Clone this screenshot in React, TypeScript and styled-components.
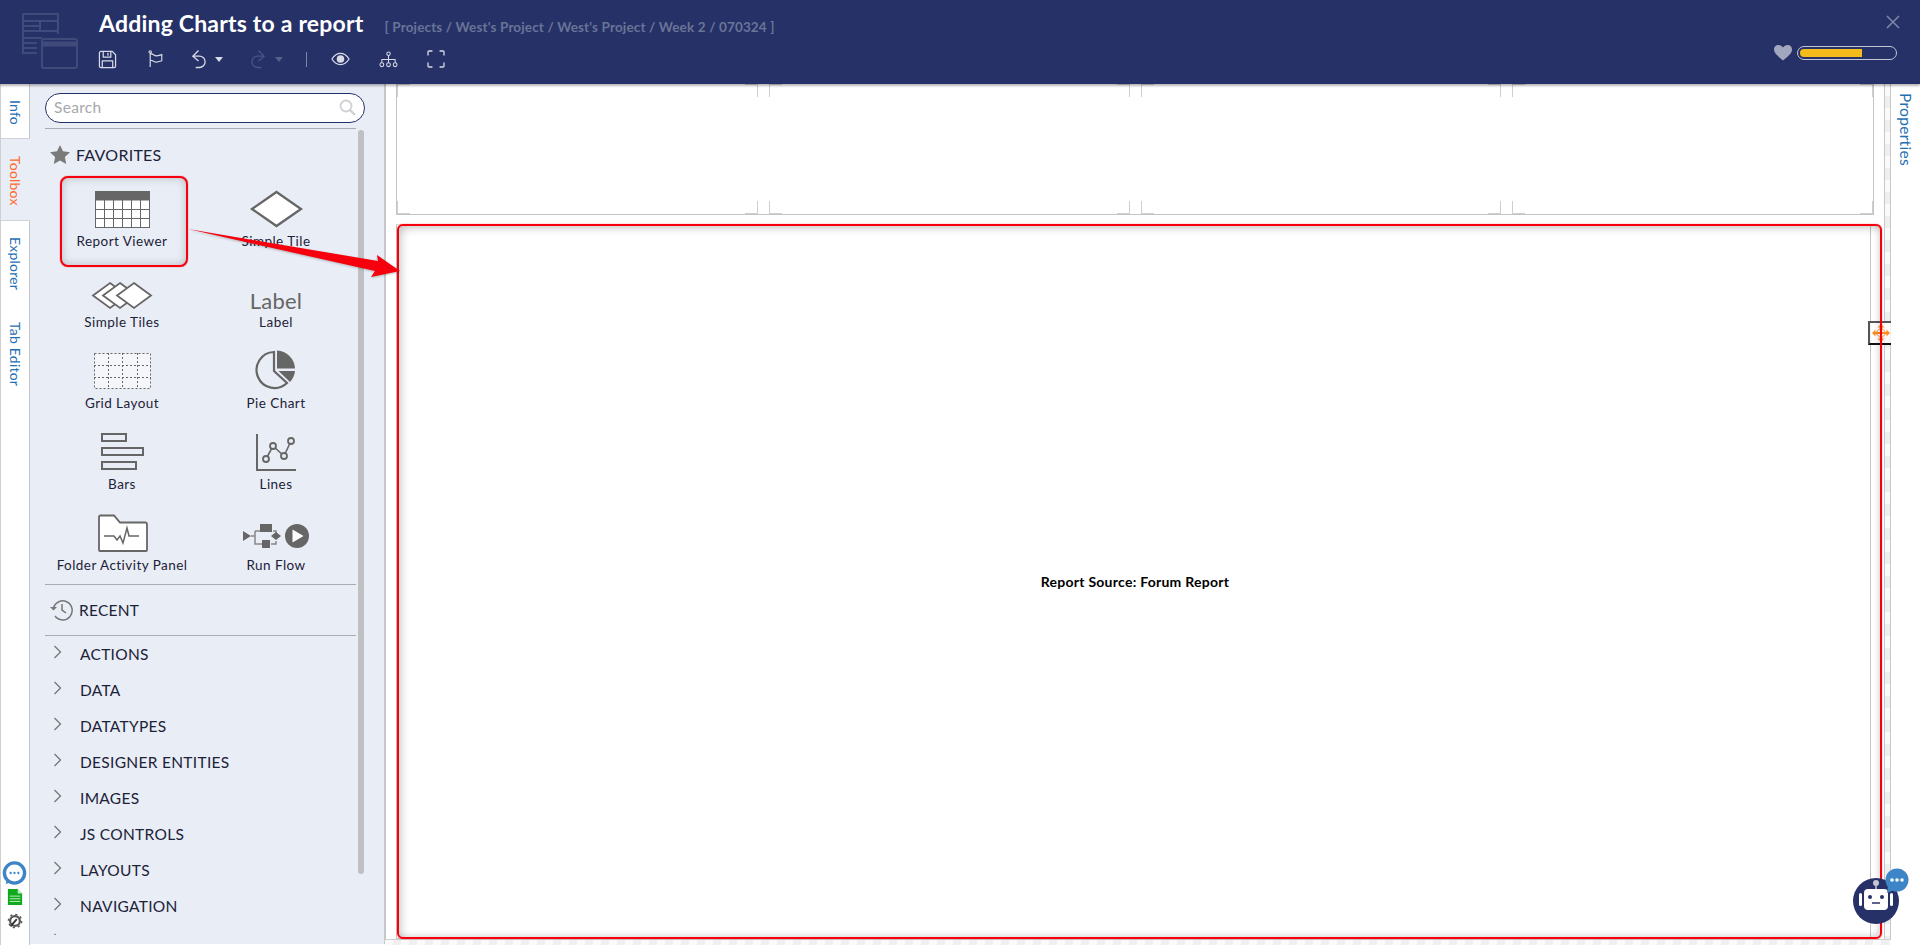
import React from "react";
import styled, { createGlobalStyle } from "styled-components";

const Global = createGlobalStyle`
  html, body { margin: 0; padding: 0; height: 945px; overflow: hidden; background: #fff; }
  body { font-family: Lato, "Open Sans", sans-serif; }
  * { box-sizing: border-box; }
`;

const Page = styled.div`
  position: relative;
  width: 1920px;
  height: 945px;
  display: flex;
  flex-direction: column;
  overflow: hidden;
`;

const Header = styled.header`
  height: 84px;
  flex: none;
  background: #263167;
  display: flex;
  position: relative;
  z-index: 2;
  box-shadow: 0 2px 2px rgba(0, 0, 0, 0.28);
`;
const LogoBox = styled.div`
  width: 99px;
  flex: none;
  padding: 13px 0 0 22px;
`;
const HeadMain = styled.div`
  flex: 1;
  display: flex;
  flex-direction: column;
`;
const TitleRow = styled.div`
  display: flex;
  align-items: baseline;
  height: 44px;
  padding-top: 8px;
`;
const Title = styled.h1`
  margin: 0;
  font-size: 23px;
  line-height: 30px;
  font-weight: 700;
  color: #fff;
  letter-spacing: 0.2px;
`;
const Crumb = styled.span`
  margin-left: 21px;
  font-size: 13.5px;
  font-weight: 700;
  color: #6a7498;
  letter-spacing: 0.14px;
`;
const Toolbar = styled.div`
  display: flex;
  align-items: center;
  height: 30px;
  margin-left: -1px;
`;
const ToolSlot = styled.div<{ $w: number }>`
  width: ${(p) => p.$w}px;
  flex: none;
  display: flex;
  align-items: center;
`;
const Sep = styled.div`
  width: 1px;
  height: 15px;
  background: #7d86a6;
`;
const Caret = styled.i<{ $dim?: boolean }>`
  display: block;
  width: 0;
  height: 0;
  border-left: 4.5px solid transparent;
  border-right: 4.5px solid transparent;
  border-top: 5px solid ${(p) => (p.$dim ? "#56608a" : "#d8dbe6")};
`;
const HeadRight = styled.div`
  width: 150px;
  flex: none;
  display: flex;
  flex-direction: column;
  align-items: flex-end;
  padding: 13px 20px 0 0;
`;
const CloseX = styled.div`
  height: 14px;
  margin-bottom: 18px;
`;
const Vitals = styled.div`
  display: flex;
  align-items: center;
  gap: 5px;
  margin-right: 3px;
`;
const Progress = styled.div`
  width: 100px;
  height: 14px;
  border: 1px solid #c3c6d4;
  border-radius: 7px;
  padding: 2px;
`;
const ProgressFill = styled.div`
  width: 62px;
  height: 8px;
  border-radius: 4px 0 0 4px;
  background: #f3bc1a;
`;

const Body = styled.main`
  flex: 1;
  display: flex;
  min-height: 0;
`;
const Rail = styled.nav`
  width: 30px;
  flex: none;
  display: flex;
  flex-direction: column;
  background: #fff;
  border-left: 1px solid #cfcfcf;
  border-right: 1px solid #c4c6cc;
`;
const RailTab = styled.div<{ $h: number; $active?: boolean }>`
  height: ${(p) => p.$h}px;
  flex: none;
  writing-mode: vertical-rl;
  display: flex;
  align-items: center;
  justify-content: center;
  font-size: 14px;
  letter-spacing: 0.2px;
  padding-top: 2px;
  color: ${(p) => (p.$active ? "#ff6a2b" : "#1f6fb2")};
  background: ${(p) => (p.$active ? "#e9edf5" : "#fff")};
  border-top: ${(p) => (p.$active ? "1px solid #cfd2d8" : "none")};
  border-bottom: ${(p) => (p.$active ? "1px solid #cfd2d8" : "none")};
  margin-right: ${(p) => (p.$active ? "-1px" : "0")};
`;
const RailTools = styled.div`
  margin-top: auto;
  padding-bottom: 16px;
  display: flex;
  flex-direction: column;
  align-items: center;
  margin-left: -1px;
`;

const Panel = styled.aside`
  width: 356px;
  flex: none;
  position: relative;
  background: #e9edf5;
  border-right: 2px solid #c6c7ca;
  padding: 9px 0 0 15px;
  height: 860px;
`;
const SearchBox = styled.div`
  width: 320px;
  height: 30px;
  background: #fff;
  border: 1px solid #263167;
  border-radius: 15px;
  display: flex;
  align-items: center;
  justify-content: space-between;
  padding: 0 8px 2px 8px;
  font-size: 15.5px;
  color: #a6a8ad;
  letter-spacing: 0.3px;
`;
const Divider = styled.div`
  width: 311px;
  height: 1px;
  background: #a9abb0;
`;
const SearchRule = styled(Divider)`
  margin-top: 5px;
`;
const Scrollbar = styled.div`
  position: absolute;
  left: 328px;
  top: 46px;
  width: 6px;
  height: 744px;
  border-radius: 3px;
  background: #bfc0c2;
`;
const SectionHead = styled.div<{ $h: number; $size: number; $nudge: number }>`
  height: ${(p) => p.$h}px;
  display: flex;
  align-items: center;
  gap: 6px;
  padding-left: 5px;
  padding-top: ${(p) => p.$nudge}px;
  font-size: ${(p) => p.$size}px;
  color: #1c2238;
  letter-spacing: 0.25px;
`;
const TileGrid = styled.div`
  display: grid;
  grid-template-columns: 154px 154px;
  grid-auto-rows: 81px;
`;
const Tile = styled.div`
  display: flex;
  flex-direction: column;
  align-items: center;
  padding-top: 10px;
`;
const TileArt = styled.div`
  width: 80px;
  height: 48px;
  display: flex;
  align-items: center;
  justify-content: center;
  color: #666;
`;
const TileLabel = styled.div`
  height: 16px;
  line-height: 16px;
  font-size: 13.5px;
  color: #1c2238;
  white-space: nowrap;
  letter-spacing: 0.45px;
`;
const LabelGlyph = styled.div`
  font-size: 22px;
  line-height: 24px;
  color: #666;
  margin-top: 21px;
  letter-spacing: 0.2px;
`;
const RecentRule = styled(Divider)`
  margin-top: 4px;
`;
const AccordionClip = styled.div`
  height: 299px;
  overflow: hidden;
`;
const AccRow = styled.div`
  height: 36px;
  display: flex;
  align-items: center;
  font-size: 15.5px;
  color: #1c2238;
  letter-spacing: 0.3px;
`;
const AccChevron = styled.span`
  width: 35px;
  padding-left: 8px;
  display: flex;
  margin-top: -5px;
`;

const Gutter = styled.div`
  width: 10px;
  flex: none;
`;
const Canvas = styled.section`
  flex: 1;
  position: relative;
  display: flex;
  flex-direction: column;
  min-width: 0;
  background: #fff;
`;
const Stage = styled.div`
  width: 1478px;
  flex: none;
  display: flex;
  flex-direction: column;
`;
const TopRow = styled.div`
  height: 131px;
  display: grid;
  grid-template-columns: repeat(4, 1fr);
  gap: 11px;
  border-left: 1px solid #c4c4c4;
  border-right: 1px solid #c4c4c4;
  border-bottom: 1px solid #c4c4c4;
`;
const Cell = styled.div`
  background-color: #fff;
  background-repeat: no-repeat;
  background-image:
    linear-gradient(#cfcfcf, #cfcfcf), linear-gradient(#cfcfcf, #cfcfcf),
    linear-gradient(#cfcfcf, #cfcfcf), linear-gradient(#cfcfcf, #cfcfcf),
    linear-gradient(#cfcfcf, #cfcfcf), linear-gradient(#cfcfcf, #cfcfcf),
    linear-gradient(#cfcfcf, #cfcfcf), linear-gradient(#cfcfcf, #cfcfcf);
  background-size: 13px 1px, 1px 13px, 13px 1px, 1px 13px, 13px 1px, 1px 13px, 13px 1px, 1px 13px;
  background-position: left top, left top, right top, right top, left bottom, left bottom, right bottom, right bottom;
`;
const ReportFrame = styled.div`
  margin-top: 9px;
  margin-right: 3px;
  height: 715px;
  border: 1px solid #c4c4c4;
  border-top-color: #dcdcdc;
  display: flex;
  align-items: center;
  justify-content: center;
  font-size: 14px;
  font-weight: 700;
  color: #000;
  letter-spacing: 0.25px;
  padding-left: 3px;
`;
const Checker = styled.div`
  position: absolute;
  left: -11px;
  right: 0;
  bottom: 0;
  height: 6px;
  border-top: 1px solid #d0d0d0;
  background: repeating-conic-gradient(#efefef 0 25%, #fafafa 0 50%) 0 0 / 16px 16px;
`;
const RightGuides = styled.div`
  position: absolute;
  top: 0;
  bottom: 0;
  left: 1488px;
  width: 7px;
  border-left: 1px solid #c8c8c8;
  border-right: 1px solid #c8c8c8;
  background: repeating-conic-gradient(#efefef 0 25%, #fafafa 0 50%) 0 0 / 12px 24px;
`;
const PropertiesRail = styled.div`
  width: 29px;
  flex: none;
  background: #fff;
  writing-mode: vertical-rl;
  font-size: 15.5px;
  letter-spacing: 0.3px;
  color: #1f6fb2;
  padding: 9px 5px 0 0;
`;
const Overlay = styled.svg`
  position: absolute;
  left: 0;
  top: 0;
  pointer-events: none;
  z-index: 3;
`;
const Highlight = styled.div`
  position: absolute;
  left: 60px;
  top: 176px;
  width: 128px;
  height: 91px;
  border: 2px solid #f5000c;
  border-radius: 8px;
  box-shadow: inset 0 0 8px rgba(0, 0, 0, 0.22), 0 0 1px #f5000c;
  z-index: 2;
`;
const ReportHighlight = styled.div`
  position: absolute;
  left: 397px;
  top: 224px;
  width: 1485px;
  height: 715px;
  border: 2px solid #f5000c;
  border-radius: 6px;
  box-shadow: 0 0 1px #f5000c, inset 6px 6px 8px -4px rgba(0, 0, 0, 0.22), inset -4px -4px 6px -3px rgba(0, 0, 0, 0.18);
  z-index: 2;
`;
const MoveHandle = styled.div`
  position: absolute;
  left: 1868px;
  top: 321px;
  width: 23px;
  height: 24px;
  background: rgba(255, 255, 255, 0.75);
  border-left: 2px solid #555;
  border-top: 2px solid #555;
  border-bottom: 2px solid #111;
  display: flex;
  align-items: center;
  justify-content: center;
  z-index: 2;
`;
const Bot = styled.div`
  position: absolute;
  left: 1853px;
  top: 868px;
  z-index: 4;
`;

const G = "#666";
const tool = "#d8dbe6";

const Logo = () => (
  <svg width="56" height="56" viewBox="0 0 56 56" fill="none" stroke="#404b7c" strokeWidth="2">
    <path d="M36 21V1H1v39h14" />
    <path d="M1 8h35M1 13h17M1 18h35M18 8v10M1 25h19M1 30h14M1 35h14" />
    <rect x="20" y="26" width="35" height="29" rx="2" />
    <path d="M20 31h35" strokeWidth="5" />
  </svg>
);
const SaveI = () => (
  <svg width="19" height="19" viewBox="0 0 20 20" fill="none" stroke={tool} strokeWidth="1.300" strokeLinejoin="round">
    <path d="M3 1.500h12l3.500 3.500v12a1.500 1.500 0 0 1-1.500 1.500H3A1.500 1.500 0 0 1 1.500 17V3A1.500 1.500 0 0 1 3 1.500z" />
    <path d="M5.500 1.500v6h8v-6M4.500 18.500v-7h11v7M10.500 3v3" />
  </svg>
);
const FlagI = () => (
  <svg width="16" height="20" viewBox="0 0 18 20" fill="none" stroke={tool} strokeWidth="1.300">
    <circle cx="2.500" cy="2" r="1.300" />
    <path d="M2.500 3.500V19M2.500 4c3-.5 4 2.500 7 2.500 2.500 0 4-1 6-1.500v7c-2 .5-3.500 1.500-6 1.500-3 0-4-2.500-7-2" />
  </svg>
);
const UndoI = ({ c = tool, flip = false }: { c?: string; flip?: boolean }) => (
  <svg width="16" height="20" viewBox="0 0 17 20" fill="none" stroke={c} strokeWidth="1.400" style={flip ? { transform: "scaleX(-1)" } : undefined}>
    <path d="M8 1L2 7l6 5" />
    <path d="M2 7h7a6 6 0 0 1 0 12H5" />
  </svg>
);
const EyeI = () => (
  <svg width="19" height="14" viewBox="0 0 20 14">
    <path d="M1 7c2.500-4 5.500-6 9-6s6.500 2 9 6c-2.500 4-5.500 6-9 6s-6.500-2-9-6z" fill="none" stroke={tool} strokeWidth="1.300" />
    <circle cx="10" cy="7" r="4" fill={tool} />
  </svg>
);
const TreeI = () => (
  <svg width="19" height="17" viewBox="0 0 20 17" fill="none" stroke={tool} strokeWidth="1.100">
    <circle cx="10" cy="2.500" r="1.800" />
    <path d="M10 4.500v4M3 12V8.500h14V12M10 8.500V12" />
    <circle cx="3" cy="14" r="2" />
    <circle cx="10" cy="14" r="2" />
    <circle cx="17" cy="14" r="2" />
  </svg>
);
const FrameI = () => (
  <svg width="18" height="18" viewBox="0 0 18 18" fill="none" stroke={tool} strokeWidth="1.300" strokeLinecap="round">
    <path d="M1 5V2a1 1 0 0 1 1-1h3M13 1h3a1 1 0 0 1 1 1v3M17 13v3a1 1 0 0 1-1 1h-3M5 17H2a1 1 0 0 1-1-1v-3" />
  </svg>
);

const Art = ({ children }: { children: React.ReactNode }) => (
  <svg width="80" height="48" viewBox="0 0 80 48" fill="none" stroke={G}>
    {children}
  </svg>
);
const gridLines = [22, 31, 40, 49, 58];
const ReportI = () => (
  <Art>
    <rect x="13" y="6" width="55" height="9" fill={G} stroke="none" />
    <rect x="13.500" y="15" width="54" height="27.500" fill="#fff" strokeWidth="1" />
    {gridLines.map((x) => (
      <path key={x} d={`M${x}.5 15v27`} strokeWidth="1" />
    ))}
    <path d="M13 24.500h55M13 33.500h55" strokeWidth="1" />
  </Art>
);
const TileI = () => (
  <Art>
    <path d="M40.500 7L65 24 40.500 41 16 24z" fill="#fff" strokeWidth="2.300" />
  </Art>
);
const TilesI = () => (
  <Art>
    <path d="M28 17l17 12.500L28 42 11 29.500z" fill="#fff" strokeWidth="1.800" />
    <path d="M38 17l17 12.500L38 42 21 29.500z" fill="#fff" strokeWidth="1.800" />
    <path d="M52 17l17 12.500L52 42 35 29.500z" fill="#fff" strokeWidth="1.800" />
  </Art>
);
const GridI = () => (
  <Art>
    <g strokeWidth="1" strokeDasharray="2 2">
      <rect x="12.500" y="6.500" width="56" height="35" fill="#f4f6fa" />
      <path d="M26.500 6v36M40.500 6v36M55.500 6v36M12 18.500h57M12 30.500h57" />
    </g>
  </Art>
);
const PieI = () => (
  <Art>
    <path d="M38 5a18 18 0 1 0 13 31L38 24z" strokeWidth="2.200" />
    <path d="M41 3.500a19 19 0 0 1 18 18H41z" fill={G} stroke="none" />
    <path d="M42.500 24H59a19 19 0 0 1-5 11z" fill={G} stroke="none" />
  </Art>
);
const BarsI = () => (
  <Art>
    <g strokeWidth="2" fill="none">
      <rect x="20" y="6" width="24" height="7" />
      <rect x="20" y="20" width="41" height="7" />
      <rect x="20" y="34" width="34" height="7" />
    </g>
  </Art>
);
const LinesI = () => (
  <Art>
    <path d="M21 6v36h39" strokeWidth="2" />
    <path d="M30 31l7-13 11 10 7-15" strokeWidth="1.600" />
    <g fill="#e9edf5" strokeWidth="1.800">
      <circle cx="30" cy="31" r="3" />
      <circle cx="37" cy="18" r="3" />
      <circle cx="48" cy="28" r="3" />
      <circle cx="55" cy="13" r="3" />
    </g>
  </Art>
);
const FolderI = () => (
  <Art>
    <path d="M17 8a1.500 1.500 0 0 1 1.500-1.500H32l6 7h26a1.500 1.500 0 0 1 1 1.500v26a1 1 0 0 1-1 1H18a1 1 0 0 1-1-1z" fill="#fff" strokeWidth="1.800" />
    <path d="M22 27h10l3 4 3-4 3 7 4-15 2 8h10" strokeWidth="1.500" />
  </Art>
);
const RunI = () => (
  <Art>
    <path d="M7 22l8 5-8 5z" fill={G} stroke="none" />
    <path d="M19 22h6M37 22h3v3M19 22v13h7M35 35h5v-3" strokeWidth="1.500" stroke="#888" />
    <path d="M15 27h4" strokeWidth="1.500" stroke="#888" />
    <rect x="24" y="15" width="12" height="8" fill={G} stroke="none" />
    <rect x="26" y="31" width="8" height="8" fill={G} stroke="none" />
    <path d="M40 23l5 4-5 4-5-4z" fill={G} stroke="none" />
    <circle cx="61" cy="27" r="12" fill={G} stroke="none" />
    <path d="M56.500 20.500l11 6.500-11 6.500z" fill="#fff" stroke="none" />
  </Art>
);

const tiles: { label: string; art: React.ReactNode }[] = [
  { label: "Report Viewer", art: <ReportI /> },
  { label: "Simple Tile", art: <TileI /> },
  { label: "Simple Tiles", art: <TilesI /> },
  { label: "Label", art: <LabelGlyph>Label</LabelGlyph> },
  { label: "Grid Layout", art: <GridI /> },
  { label: "Pie Chart", art: <PieI /> },
  { label: "Bars", art: <BarsI /> },
  { label: "Lines", art: <LinesI /> },
  { label: "Folder Activity Panel", art: <FolderI /> },
  { label: "Run Flow", art: <RunI /> },
];
const groups = ["ACTIONS", "DATA", "DATATYPES", "DESIGNER ENTITIES", "IMAGES", "JS CONTROLS", "LAYOUTS", "NAVIGATION", ""];

const Chevron = () => (
  <svg width="9" height="14" viewBox="0 0 9 14" fill="none" stroke="#777" strokeWidth="1.300">
    <path d="M1.500 1l6 6-6 6" />
  </svg>
);

export default function App() {
  return (
    <Page>
      <Global />
      <Header>
        <LogoBox>
          <Logo />
        </LogoBox>
        <HeadMain>
          <TitleRow>
            <Title>Adding Charts to a report</Title>
            <Crumb>[ Projects / West's Project / West's Project / Week 2 / 070324 ]</Crumb>
          </TitleRow>
          <Toolbar>
            <ToolSlot $w={50}><SaveI /></ToolSlot>
            <ToolSlot $w={43}><FlagI /></ToolSlot>
            <ToolSlot $w={24}><UndoI /></ToolSlot>
            <ToolSlot $w={35}><Caret /></ToolSlot>
            <ToolSlot $w={25}><UndoI c="#4a5583" flip /></ToolSlot>
            <ToolSlot $w={31}><Caret $dim /></ToolSlot>
            <ToolSlot $w={25}><Sep /></ToolSlot>
            <ToolSlot $w={48}><EyeI /></ToolSlot>
            <ToolSlot $w={48}><TreeI /></ToolSlot>
            <ToolSlot $w={48}><FrameI /></ToolSlot>
          </Toolbar>
        </HeadMain>
        <HeadRight>
          <CloseX>
            <svg width="14" height="14" viewBox="0 0 14 14" stroke="#7d86a6" strokeWidth="1.600">
              <path d="M1 1l12 12M13 1L1 13" />
            </svg>
          </CloseX>
          <Vitals>
            <svg width="18" height="16" viewBox="0 0 18 16">
              <path d="M9 15.500C3 10.500 0 8 0 4.500A4.300 4.300 0 0 1 4.500 0C6.300 0 8 1 9 2.500 10 1 11.700 0 13.500 0A4.300 4.300 0 0 1 18 4.500C18 8 15 10.500 9 15.500z" fill="#a2a7bf" />
            </svg>
            <Progress>
              <ProgressFill />
            </Progress>
          </Vitals>
        </HeadRight>
      </Header>
      <Body>
        <Rail>
          <RailTab $h={54}>Info</RailTab>
          <RailTab $h={83} $active>Toolbox</RailTab>
          <RailTab $h={84}>Explorer</RailTab>
          <RailTab $h={97}>Tab Editor</RailTab>
          <RailTools>
            <svg width="25" height="25" viewBox="0 0 26 26">
              <circle cx="13" cy="12.500" r="10.500" fill="#fff" stroke="#3d85c6" strokeWidth="3.500" />
              <path d="M5 19l-1 5 6-2z" fill="#3d85c6" />
              <circle cx="9" cy="12.500" r="1.200" fill="#3d85c6" />
              <circle cx="13" cy="12.500" r="1.200" fill="#3d85c6" />
              <circle cx="17" cy="12.500" r="1.200" fill="#3d85c6" />
            </svg>
            <svg width="16" height="16" viewBox="0 0 18 18" style={{ marginTop: 3 }}>
              <path d="M1 0h11l5 5v13H1z" fill="#10a81c" />
              <path d="M12 0v5h5" fill="#bfeec3" />
              <path d="M3 8h12M3 11h12M3 14h12" stroke="#cff3d2" strokeWidth="1" />
            </svg>
            <svg width="16" height="16" viewBox="0 0 18 18" style={{ marginTop: 8 }} fill="none" stroke="#555">
              <circle cx="9" cy="9" r="5.500" strokeWidth="2.500" />
              <circle cx="9" cy="9" r="7.500" strokeWidth="1.500" strokeDasharray="2.500 3.400" />
              <path d="M4 15L11 7" stroke="#333" strokeWidth="2.200" />
            </svg>
          </RailTools>
        </Rail>
        <Panel>
          <SearchBox>
            Search
            <svg width="17" height="17" viewBox="0 0 17 17" fill="none" stroke="#cfd0d3" strokeWidth="1.800">
              <circle cx="7" cy="7" r="5.500" />
              <path d="M11 11l5 5" strokeWidth="2.400" />
            </svg>
          </SearchBox>
          <SearchRule />
          <Scrollbar />
          <SectionHead $h={46} $size={16} $nudge={4}>
            <svg width="20" height="19" viewBox="0 0 20 19">
              <path d="M10 0l3 6.300 7 .9-5.100 4.800 1.300 6.900L10 15.500 3.800 18.900 5.100 12 0 7.200l7-.9z" fill="#7a7a7a" />
            </svg>
            FAVORITES
          </SectionHead>
          <TileGrid>
            {tiles.map((t) => (
              <Tile key={t.label}>
                <TileArt>{t.art}</TileArt>
                <TileLabel>{t.label}</TileLabel>
              </Tile>
            ))}
          </TileGrid>
          <RecentRule />
          <SectionHead $h={50} $size={15.5} $nudge={0}>
            <svg width="23" height="22" viewBox="0 0 23 22" fill="none" stroke="#777" strokeWidth="1.500">
              <path d="M3.500 9a9.500 9.500 0 1 1 1.500 8" />
              <path d="M0 8l3.500 3.500L7 8z" fill="#777" stroke="none" />
              <path d="M12 5v6l4 3" />
            </svg>
            RECENT
          </SectionHead>
          <Divider />
          <AccordionClip>
            {groups.map((g, i) => (
              <AccRow key={i}>
                <AccChevron><Chevron /></AccChevron>
                {g}
              </AccRow>
            ))}
          </AccordionClip>
        </Panel>
        <Gutter />
        <Canvas>
          <Stage>
            <TopRow>
              <Cell /><Cell /><Cell /><Cell />
            </TopRow>
            <ReportFrame>Report Source: Forum Report</ReportFrame>
          </Stage>
          <RightGuides />
          <Checker />
        </Canvas>
        <PropertiesRail>Properties</PropertiesRail>
      </Body>
      <Highlight />
      <MoveHandle>
        <svg width="18" height="18" viewBox="0 0 18 18" fill="#ff8c1a" stroke="#ff8c1a">
          <path d="M9 3.500L14.500 9 9 14.500 3.500 9z" fill="none" strokeWidth="1" />
          <path d="M2 9h14M9 2v14" strokeWidth="1.800" />
          <path d="M9 0l3.500 3.500h-7zM9 18l-3.500-3.500h7zM0 9l3.500-3.500v7zM18 9l-3.500 3.500v-7z" stroke="none" />
        </svg>
      </MoveHandle>
      <ReportHighlight />
      <Overlay width="420" height="300" viewBox="0 0 420 300">
        <path d="M188 229L378 261 377 255 400 271 371 277 375 271z" fill="#f5000c" style={{ filter: "drop-shadow(0 1px 1px rgba(0,0,0,0.25))" }} />
      </Overlay>
      <Bot>
        <svg width="56" height="56" viewBox="0 0 56 56">
          <circle cx="23" cy="33" r="23" fill="#263167" />
          <circle cx="23" cy="15" r="3" fill="#c4c8d6" />
          <path d="M23 17v4" stroke="#c4c8d6" strokeWidth="1.500" />
          <rect x="11" y="21" width="24" height="21" rx="4" fill="#fff" />
          <rect x="6" y="25" width="3" height="13" rx="1.500" fill="#fff" />
          <rect x="37" y="25" width="3" height="13" rx="1.500" fill="#fff" />
          <circle cx="17" cy="29" r="2" fill="#263167" />
          <circle cx="29" cy="29" r="2" fill="#263167" />
          <path d="M19 35h8" stroke="#263167" strokeWidth="1.500" />
          <circle cx="44" cy="12" r="11.500" fill="#3d85c6" />
          <path d="M35 18l-1 7 7-3z" fill="#3d85c6" />
          <circle cx="39" cy="12" r="1.800" fill="#fff" />
          <circle cx="44" cy="12" r="1.800" fill="#fff" />
          <circle cx="49" cy="12" r="1.800" fill="#fff" />
        </svg>
      </Bot>
    </Page>
  );
}
